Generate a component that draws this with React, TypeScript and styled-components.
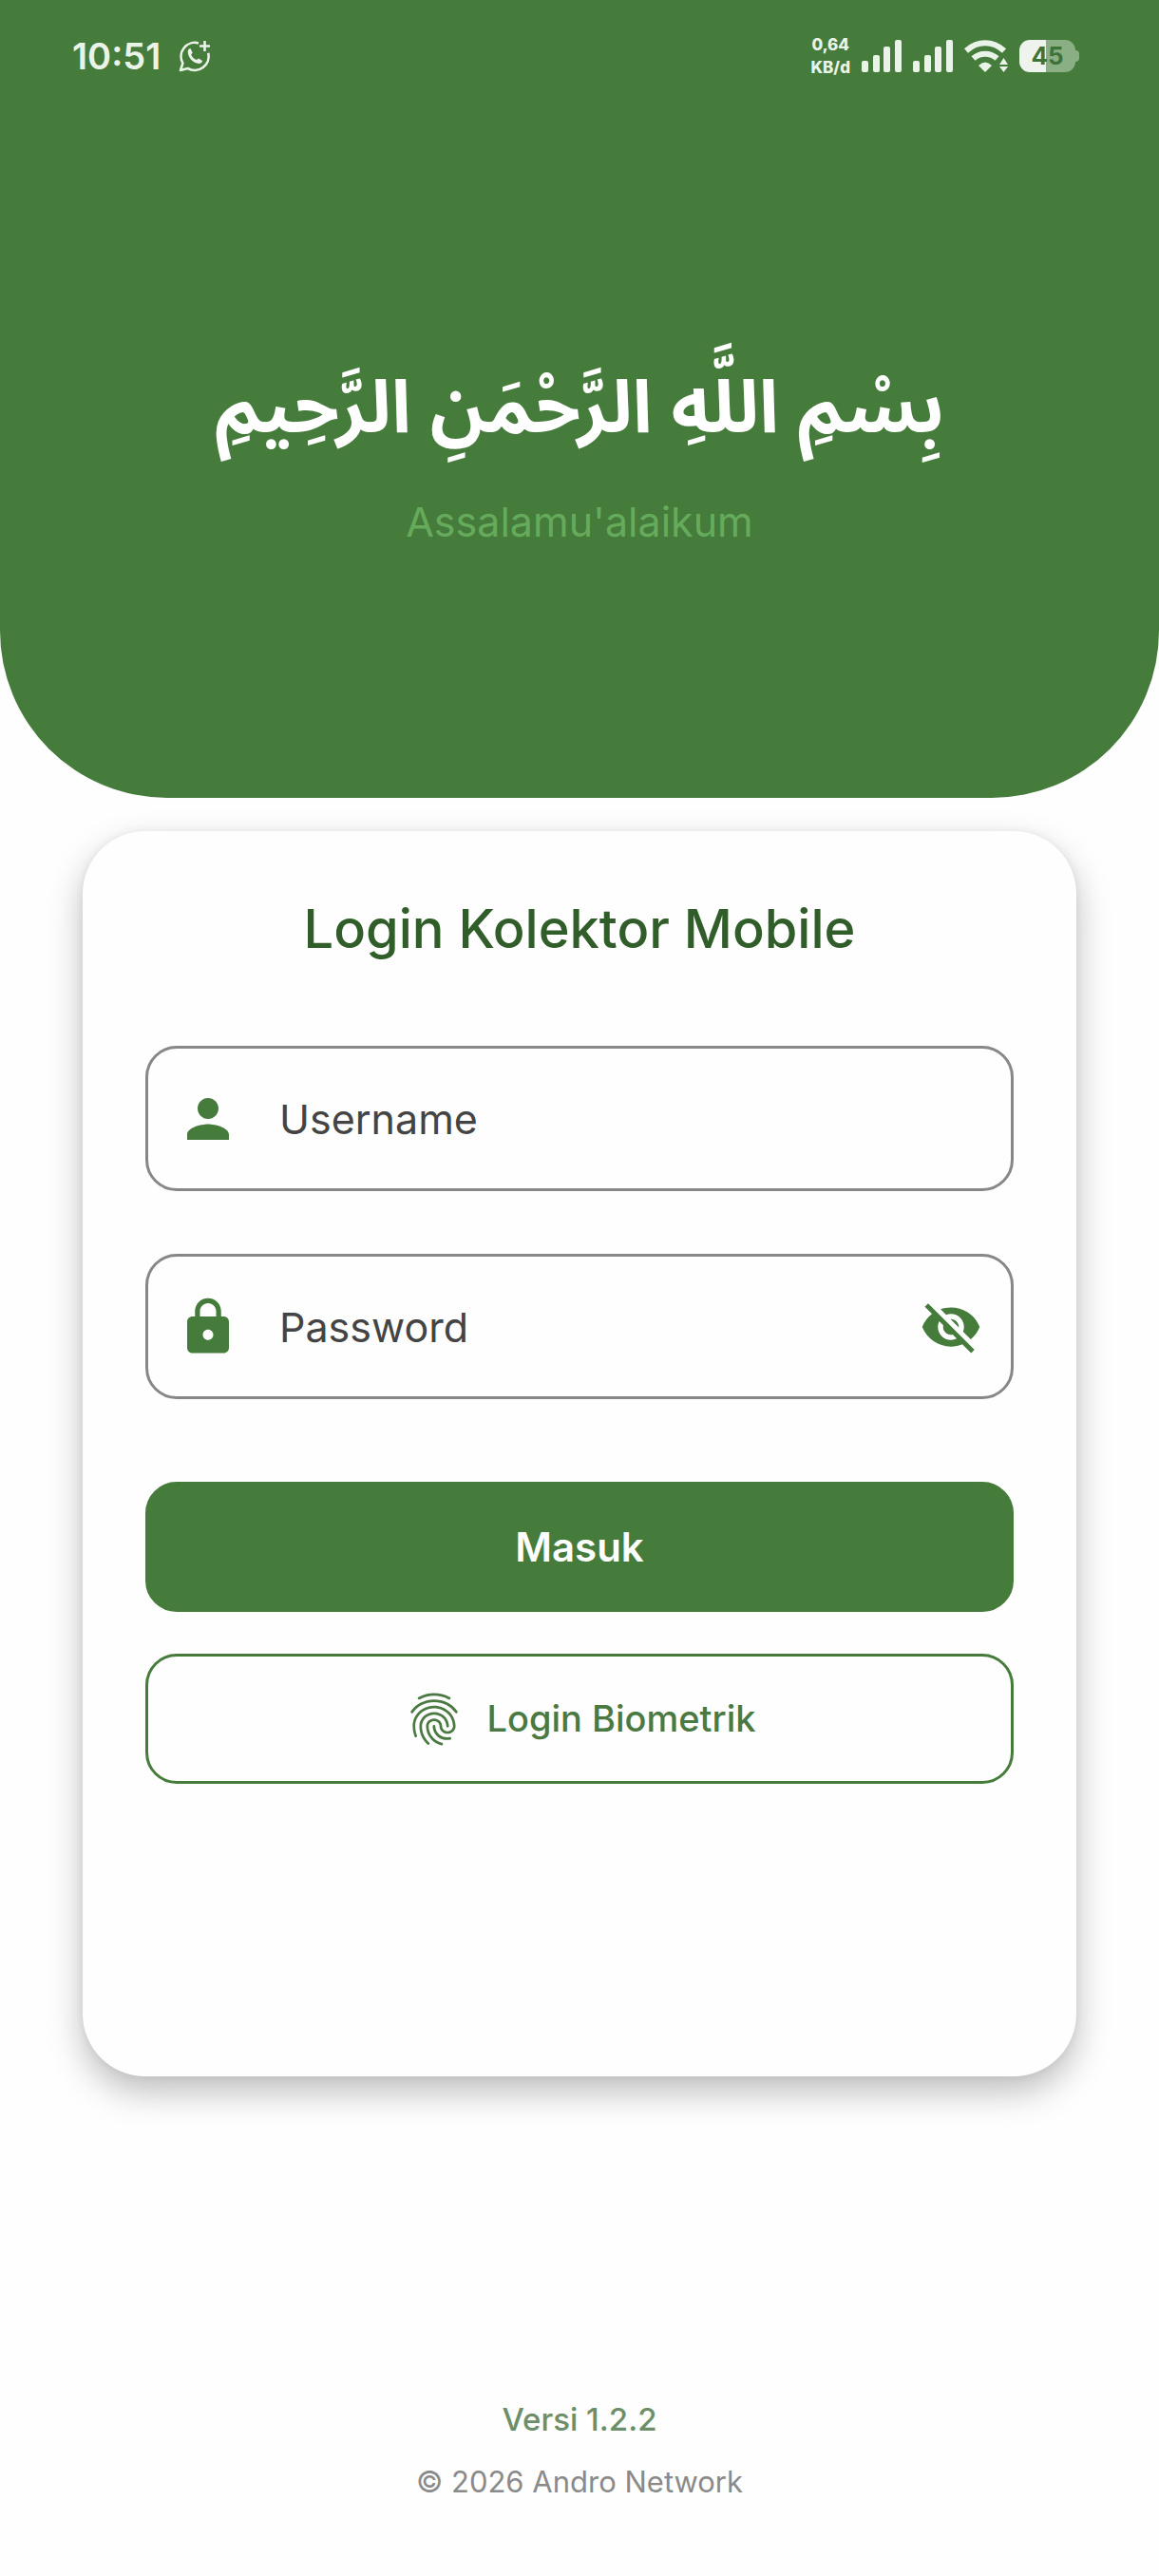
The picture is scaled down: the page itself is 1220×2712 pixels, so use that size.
import React, { useState } from "react";
import styled, { createGlobalStyle, css } from "styled-components";
import { MdPerson, MdLock, MdVisibilityOff, MdVisibility, MdFingerprint } from "react-icons/md";

const green = "#457b3b";
const latin = `Inter, "Noto Sans", "Liberation Sans", sans-serif`;

const GlobalStyle = createGlobalStyle`
  *, *::before, *::after { box-sizing: border-box; }
  body { margin: 0; background: #fefefe; font-family: ${latin}; }
`;

const Page = styled.div`
  min-height: 100vh;
  display: flex;
  flex-direction: column;
`;

const Header = styled.header`
  height: 840px;
  display: flex;
  flex-direction: column;
  background: ${green};
  border-radius: 0 0 176px 176px;
`;

const StatusBar = styled.div`
  display: flex;
  align-items: center;
  justify-content: space-between;
  height: 118px;
  padding: 0 84px 0 76px;
  color: #e9f3e7;
`;

const StatusGroup = styled.div<{ $gap: number }>`
  display: flex;
  align-items: center;
  gap: ${(p) => p.$gap}px;
`;

const Clock = styled.time`
  font-size: 38px;
  line-height: 48px;
  font-weight: 600;
`;

const Speed = styled.div`
  font-size: 17px;
  line-height: 24px;
  font-weight: 800;
  text-align: center;
`;

const Battery = styled.div`
  display: flex;
  align-items: center;
`;

const BatteryBody = styled.div`
  display: flex;
  align-items: center;
  justify-content: center;
  width: 59px;
  height: 34px;
  border-radius: 11px;
  background: linear-gradient(to right, #eef4ed 48%, #8aaf84 48%);
  color: #3f7236;
  font-size: 26px;
  line-height: 34px;
  font-weight: 700;
`;

const BatteryTip = styled.div`
  width: 4px;
  height: 12px;
  border-radius: 0 4px 4px 0;
  background: #8aaf84;
`;

const Greeting = styled.div`
  display: flex;
  flex-direction: column;
  align-items: center;
  padding-top: 245px;
`;

const Basmalah = styled.h1`
  margin: 0;
  color: #fff;
  font-family: "Noto Sans Arabic", "DejaVu Sans", sans-serif;
  font-size: 77px;
  line-height: 136px;
  font-weight: 700;
`;

const Salam = styled.p`
  margin: 17px 0 0;
  color: #66ab5c;
  font-size: 43px;
  line-height: 66px;
`;

const Card = styled.main`
  margin: 35px 87px 0;
  padding: 66px 66px 308px;
  border-radius: 66px;
  background: #fefefe;
  box-shadow: 0 16px 36px rgba(0, 0, 0, 0.26), 0 0 10px rgba(0, 0, 0, 0.06);
`;

const Title = styled.h2`
  margin: 0 0 86px;
  color: #305d29;
  font-size: 56px;
  line-height: 74px;
  font-weight: 500;
  text-align: center;
`;

const Form = styled.form`
  display: flex;
  flex-direction: column;
`;

const Fields = styled.div`
  display: flex;
  flex-direction: column;
  gap: 66px;
  margin-bottom: 87px;
`;

const Field = styled.label`
  display: flex;
  align-items: center;
  gap: 42px;
  height: 153px;
  padding: 0 30px;
  border: 3px solid #878787;
  border-radius: 33px;
  color: ${green};
`;

const Input = styled.input`
  flex: 1;
  min-width: 0;
  height: 100%;
  padding: 0;
  border: 0;
  outline: 0;
  background: transparent;
  color: #444;
  font-family: ${latin};
  font-size: 43px;
  line-height: 66px;
  &::placeholder { color: #444; opacity: 1; }
`;

const IconButton = styled.button`
  display: flex;
  padding: 0;
  border: 0;
  background: none;
  color: inherit;
`;

const Button = styled.button<{ $outlined?: boolean }>`
  display: flex;
  align-items: center;
  justify-content: center;
  gap: 22px;
  height: 137px;
  padding: 0;
  border: 3px solid ${green};
  border-radius: 33px;
  font-family: ${latin};
  ${(p) =>
    p.$outlined
      ? css`
          background: transparent;
          color: #4a7942;
          font-size: 38px;
          line-height: 55px;
          font-weight: 500;
        `
      : css`
          margin-bottom: 44px;
          background: ${green};
          color: #fff;
          font-size: 42px;
          line-height: 66px;
          font-weight: 600;
        `}
`;

const Footer = styled.footer`
  display: flex;
  flex-direction: column;
  align-items: center;
  gap: 16px;
  margin-top: auto;
  padding-bottom: 74px;
`;

const Version = styled.p`
  margin: 0;
  color: #6c8e68;
  font-size: 33px;
  line-height: 50px;
  font-weight: 500;
`;

const Copyright = styled.p`
  margin: 0;
  color: #8a8a8a;
  font-size: 31px;
  line-height: 50px;
`;

const WhatsAppIcon = () => (
  <svg width="34" height="34" viewBox="0 0 34 34" fill="none" stroke="currentColor" strokeWidth="2.6" aria-hidden="true">
    <path d="M21 3.4A14.6 14.6 0 0 0 4.4 24.6L2 32l7.600-2A14.800 14.800 0 0 0 31.300 13.800" strokeLinejoin="round" />
    <path d="M27.500 1v11M22 6.500h11" />
    <path
      d="M9.700 12.500c0-2 1.600-3.600 2.800-3.400l2.200 4.300-1.500 2c1.200 2.800 3.200 4.600 5.900 5.700l2-1.700 3.900 2.500c0 1.700-1.900 3-3.700 3-5.800-.5-11.500-6-11.600-12.400z"
      fill="currentColor"
      stroke="none"
    />
  </svg>
);

const SignalIcon = () => (
  <svg width="42" height="34" viewBox="0 0 42 34" fill="currentColor" aria-hidden="true">
    <rect x="0" y="22" width="7" height="12" rx="2" />
    <rect x="12" y="16" width="7" height="18" rx="2" />
    <rect x="23" y="7" width="7" height="27" rx="2" />
    <rect x="35" y="0" width="7" height="34" rx="2" />
  </svg>
);

const WifiIcon = () => (
  <svg width="46" height="34" viewBox="0 0 46 34" fill="none" stroke="currentColor" strokeWidth="6" aria-hidden="true">
    <path d="M2 11.500C14 .5 30 .5 42 11.500" />
    <path d="M9.500 19.500c7-6.500 18-6.500 25 0" />
    <path d="M15 27q7-7 14 0L22 34z" fill="currentColor" stroke="none" />
    <path d="M37 26l4.500-7 4.500 7zM37 28h9L41.500 34z" fill="currentColor" stroke="none" />
  </svg>
);

export default function App() {
  const [visible, setVisible] = useState(false);
  return (
    <>
      <GlobalStyle />
      <Page>
        <Header>
          <StatusBar>
            <StatusGroup $gap={19}>
              <Clock>10:51</Clock>
              <WhatsAppIcon />
            </StatusGroup>
            <StatusGroup $gap={12}>
              <Speed>
                0,64
                <br />
                KB/d
              </Speed>
              <SignalIcon />
              <SignalIcon />
              <WifiIcon />
              <Battery>
                <BatteryBody>45</BatteryBody>
                <BatteryTip />
              </Battery>
            </StatusGroup>
          </StatusBar>
          <Greeting>
            <Basmalah lang="ar" dir="rtl">بِسْمِ اللَّهِ الرَّحْمَنِ الرَّحِيمِ</Basmalah>
            <Salam>Assalamu'alaikum</Salam>
          </Greeting>
        </Header>
        <Card>
          <Title>Login Kolektor Mobile</Title>
          <Form onSubmit={(e) => e.preventDefault()}>
            <Fields>
              <Field>
                <MdPerson size={66} aria-hidden="true" />
                <Input type="text" placeholder="Username" aria-label="Username" />
              </Field>
              <Field>
                <MdLock size={66} aria-hidden="true" />
                <Input type={visible ? "text" : "password"} placeholder="Password" aria-label="Password" />
                <IconButton type="button" aria-label="Tampilkan password" onClick={() => setVisible(!visible)}>
                  {visible ? <MdVisibility size={66} /> : <MdVisibilityOff size={66} />}
                </IconButton>
              </Field>
            </Fields>
            <Button type="submit">Masuk</Button>
            <Button type="button" $outlined>
              <MdFingerprint size={66} aria-hidden="true" />
              Login Biometrik
            </Button>
          </Form>
        </Card>
        <Footer>
          <Version>Versi 1.2.2</Version>
          <Copyright>© 2026 Andro Network</Copyright>
        </Footer>
      </Page>
    </>
  );
}
